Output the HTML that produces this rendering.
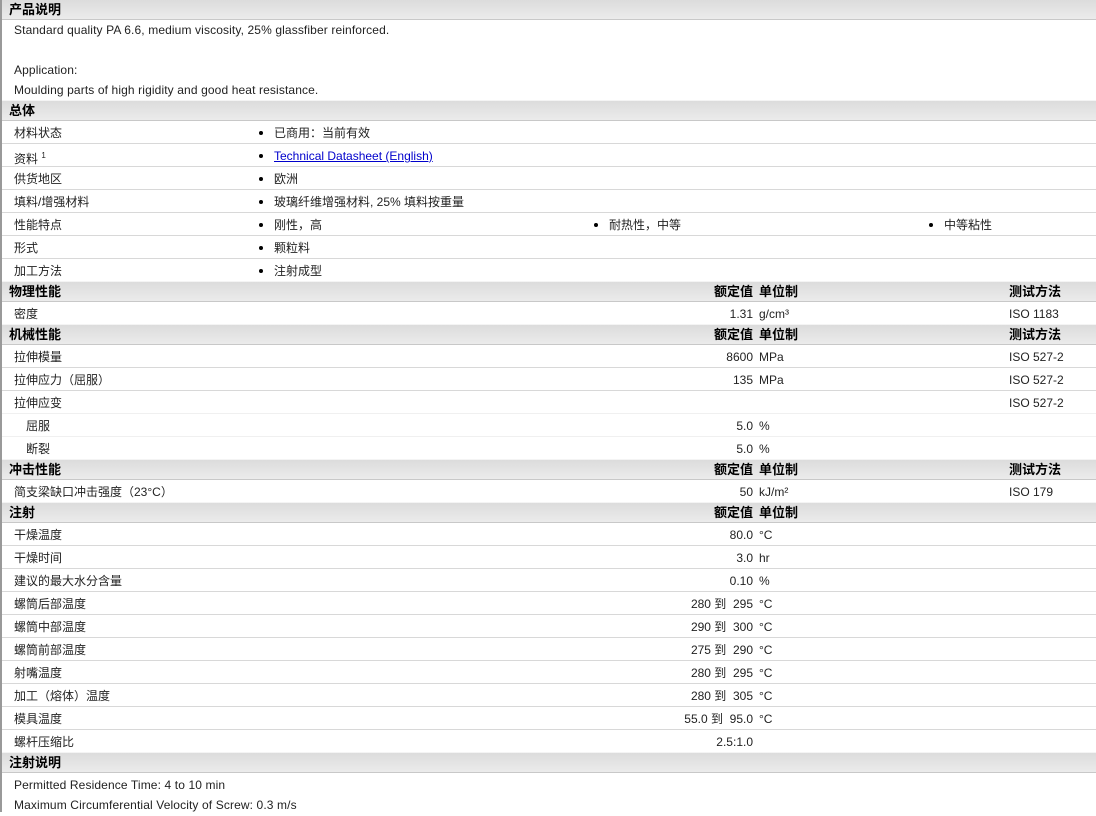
<!DOCTYPE html>
<html><head><meta charset="utf-8"><style>
body{margin:0;width:1096px;height:812px;background:#fff;overflow:hidden;position:relative;font-family:"Liberation Sans","Noto Sans CJK SC",sans-serif;font-size:12px;color:#222}
#lb{position:absolute;left:0;top:0;width:2px;height:812px;background:#999}
.h{position:absolute;left:2px;width:1094px;height:19px;line-height:19px;background:linear-gradient(#dcdcdc,#ebebeb);border-top:1px solid #f4f4f4;border-bottom:1px solid #c8c8c8;font-weight:bold;font-size:13px;color:#000}
.r{position:absolute;left:2px;width:1094px;height:22px;line-height:24px;border-bottom:1px solid #d8d8d8}
.a{position:absolute;white-space:nowrap}
.t{position:absolute;white-space:nowrap;line-height:21px;letter-spacing:0.12px}
.b::before{content:"";position:absolute;left:-15px;top:10px;width:4px;height:4px;border-radius:2px;background:#000}
a{color:#00c;text-decoration:underline}
.v{position:absolute;right:343px;text-align:right;white-space:nowrap}
.u{position:absolute;left:757px}
.m{position:absolute;left:1007px}
</style></head><body>
<div id="lb"></div>
<div class="h" style="top:-1px"><span class="a" style="left:7px">产品说明</span></div>
<div class="t" style="left:14px;top:20px">Standard quality PA 6.6, medium viscosity, 25% glassfiber reinforced.</div>
<div class="t" style="left:14px;top:60px">Application:</div>
<div class="t" style="left:14px;top:80px">Moulding parts of high rigidity and good heat resistance.</div>

<div class="h" style="top:100px"><span class="a" style="left:7px">总体</span></div>
<div class="r" style="top:121px"><span class="a" style="left:12px">材料状态</span><span class="a b" style="left:272px">已商用：当前有效</span></div>
<div class="r" style="top:144px"><span class="a" style="left:12px">资料 <sup style="font-size:8px">1</sup></span><span class="a b" style="left:272px"><a>Technical Datasheet (English)</a></span></div>
<div class="r" style="top:167px"><span class="a" style="left:12px">供货地区</span><span class="a b" style="left:272px">欧洲</span></div>
<div class="r" style="top:190px"><span class="a" style="left:12px">填料/增强材料</span><span class="a b" style="left:272px">玻璃纤维增强材料, 25% 填料按重量</span></div>
<div class="r" style="top:213px"><span class="a" style="left:12px">性能特点</span><span class="a b" style="left:272px">刚性，高</span><span class="a b" style="left:607px">耐热性，中等</span><span class="a b" style="left:942px">中等粘性</span></div>
<div class="r" style="top:236px"><span class="a" style="left:12px">形式</span><span class="a b" style="left:272px">颗粒料</span></div>
<div class="r" style="top:259px;border-bottom:none"><span class="a" style="left:12px">加工方法</span><span class="a b" style="left:272px">注射成型</span></div>

<div class="h" style="top:281px"><span class="a" style="left:7px">物理性能</span><span class="v">额定值</span><span class="u">单位制</span><span class="m">测试方法</span></div>
<div class="r" style="top:302px;border-bottom:none"><span class="a" style="left:12px">密度</span><span class="v">1.31</span><span class="u">g/cm³</span><span class="m">ISO 1183</span></div>

<div class="h" style="top:324px"><span class="a" style="left:7px">机械性能</span><span class="v">额定值</span><span class="u">单位制</span><span class="m">测试方法</span></div>
<div class="r" style="top:345px"><span class="a" style="left:12px">拉伸模量</span><span class="v">8600</span><span class="u">MPa</span><span class="m">ISO 527-2</span></div>
<div class="r" style="top:368px"><span class="a" style="left:12px">拉伸应力（屈服）</span><span class="v">135</span><span class="u">MPa</span><span class="m">ISO 527-2</span></div>
<div class="r" style="top:391px;border-bottom-color:#f0f0f0"><span class="a" style="left:12px">拉伸应变</span><span class="m">ISO 527-2</span></div>
<div class="r" style="top:414px;border-bottom-color:#f0f0f0"><span class="a" style="left:24px">屈服</span><span class="v">5.0</span><span class="u">%</span></div>
<div class="r" style="top:437px;border-bottom:none"><span class="a" style="left:24px">断裂</span><span class="v">5.0</span><span class="u">%</span></div>

<div class="h" style="top:459px"><span class="a" style="left:7px">冲击性能</span><span class="v">额定值</span><span class="u">单位制</span><span class="m">测试方法</span></div>
<div class="r" style="top:480px;border-bottom:none"><span class="a" style="left:12px">简支梁缺口冲击强度（23°C）</span><span class="v">50</span><span class="u">kJ/m²</span><span class="m">ISO 179</span></div>

<div class="h" style="top:502px"><span class="a" style="left:7px">注射</span><span class="v">额定值</span><span class="u">单位制</span></div>
<div class="r" style="top:523px"><span class="a" style="left:12px">干燥温度</span><span class="v">80.0</span><span class="u">°C</span></div>
<div class="r" style="top:546px"><span class="a" style="left:12px">干燥时间</span><span class="v">3.0</span><span class="u">hr</span></div>
<div class="r" style="top:569px"><span class="a" style="left:12px">建议的最大水分含量</span><span class="v">0.10</span><span class="u">%</span></div>
<div class="r" style="top:592px"><span class="a" style="left:12px">螺筒后部温度</span><span class="v">280 到 &nbsp;295</span><span class="u">°C</span></div>
<div class="r" style="top:615px"><span class="a" style="left:12px">螺筒中部温度</span><span class="v">290 到 &nbsp;300</span><span class="u">°C</span></div>
<div class="r" style="top:638px"><span class="a" style="left:12px">螺筒前部温度</span><span class="v">275 到 &nbsp;290</span><span class="u">°C</span></div>
<div class="r" style="top:661px"><span class="a" style="left:12px">射嘴温度</span><span class="v">280 到 &nbsp;295</span><span class="u">°C</span></div>
<div class="r" style="top:684px"><span class="a" style="left:12px">加工（熔体）温度</span><span class="v">280 到 &nbsp;305</span><span class="u">°C</span></div>
<div class="r" style="top:707px"><span class="a" style="left:12px">模具温度</span><span class="v">55.0 到 &nbsp;95.0</span><span class="u">°C</span></div>
<div class="r" style="top:730px;border-bottom:none"><span class="a" style="left:12px">螺杆压缩比</span><span class="v">2.5:1.0</span></div>

<div class="h" style="top:752px"><span class="a" style="left:7px">注射说明</span></div>
<div class="t" style="left:14px;top:775px">Permitted Residence Time: 4 to 10 min</div>
<div class="t" style="left:14px;top:795px">Maximum Circumferential Velocity of Screw: 0.3 m/s</div>
</body></html>
